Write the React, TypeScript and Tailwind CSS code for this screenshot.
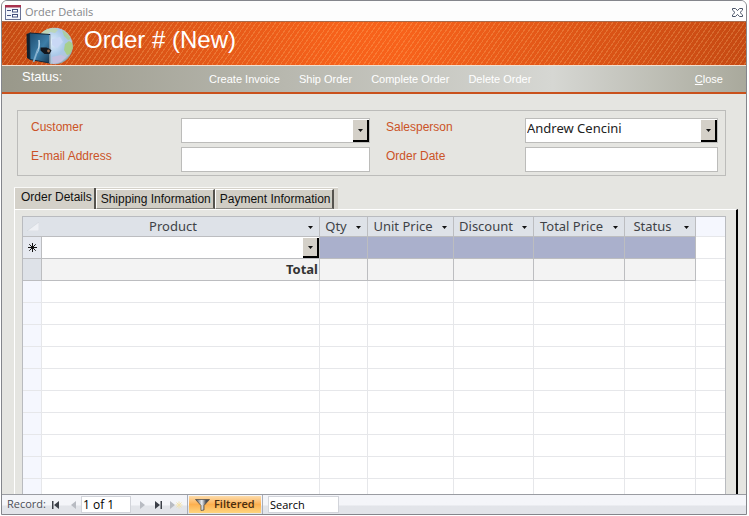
import { useState } from "react";
import type { ReactNode } from "react";

const uiFont = "font-['Liberation_Sans',sans-serif]";
const sheetFont = "font-['Noto_Sans',sans-serif]";

function FormIcon() {
  return (
    <svg width="16" height="15" viewBox="0 0 16 15" aria-hidden="true">
      <rect x="0.5" y="0.5" width="15" height="14" fill="#f4f6fc" stroke="#6a7396" />
      <rect x="0" y="0" width="16" height="2.5" fill="#a8324e" />
      <path d="M2 5.5h4M2 10.5h4" stroke="#44507e" strokeWidth="1.2" />
      <rect x="7.5" y="4.5" width="5" height="2.5" fill="#fff" stroke="#44507e" />
      <rect x="7.5" y="9.5" width="5" height="2.5" fill="#fff" stroke="#44507e" />
    </svg>
  );
}

function CloseIcon() {
  return (
    <svg width="11" height="9" viewBox="0 0 11 9" aria-hidden="true">
      <path
        d="M0.5 0.5h3L5.5 2.6L7.5 0.5h3v1.6L8 4.5l2.5 2.4v1.6h-3L5.5 6.4L3.5 8.5h-3V6.9L3 4.5L0.5 2.1Z"
        fill="#fff"
        stroke="#4a5468"
      />
    </svg>
  );
}

function OrderLogo() {
  return (
    <svg width="48" height="38" viewBox="0 0 48 38" aria-hidden="true">
      <defs>
        <radialGradient id="globe" cx="0.42" cy="0.4" r="0.62">
          <stop offset="0" stopColor="#dfeefb" />
          <stop offset="0.6" stopColor="#a9c8e8" />
          <stop offset="0.9" stopColor="#b3c6da" />
          <stop offset="1" stopColor="#8da4ac" />
        </radialGradient>
        <linearGradient id="cover" x1="0" y1="0" x2="1" y2="1">
          <stop offset="0" stopColor="#1d4a6c" />
          <stop offset="0.55" stopColor="#3d7ea8" />
          <stop offset="1" stopColor="#16354f" />
        </linearGradient>
      </defs>
      <circle cx="28.5" cy="19" r="18.3" fill="url(#globe)" />
      <path d="M15 6Q21 1 29 1l3 2-3 3-5-1-4 4-4 1Z" fill="#bdd6b4" opacity="0.9" />
      <path d="M36 3q6 3 9 9l-3 1-4-4Z" fill="#a9cf93" opacity="0.8" />
      <path d="M39 17l4-3 3 2 1 5-3 6-3 1-3-5Z" fill="#a6cf83" opacity="0.9" />
      <path d="M26 30l9-2 5 2-5 5-8 2Z" fill="#c4c0e0" />
      <path d="M26 12l8-2 3 5-6 6-5-3Z" fill="#c9d8f5" />
      <path d="M0.5 7l4-1.5v27.5l-3.5-2Z" fill="#14202c" />
      <path d="M3.5 6l20.5 1.5V36L4 32.5Z" fill="url(#cover)" stroke="#11293e" />
      <path d="M24 8v28" stroke="#d7e5ef" />
      <path d="M14.5 20.5h6l3.5 1.5 1.5 1.5-2 3.5h-5l-4-3.5Z" fill="#12161d" />
      <circle cx="22.5" cy="24" r="1.4" fill="#93694c" />
      <path d="M13 13q1 7-2 13" fill="none" stroke="#b7d5e8" strokeWidth="1.6" />
      <path d="M12 22l-4.5 13" stroke="#86b1cf" strokeWidth="1.8" />
    </svg>
  );
}

function Caret() {
  return (
    <svg width="5" height="3" viewBox="0 0 5 3" aria-hidden="true">
      <path d="M0 0h5L2.5 3Z" fill="#111" />
    </svg>
  );
}

function Combo({ id, label, options, bare = false }: { id: string; label?: string; options: string[]; bare?: boolean }) {
  return (
    <div className={`relative w-full ${bare ? "h-[21px]" : "h-[25px] border border-[#bcbcba]"}`}>
      <select
        id={id}
        aria-label={label}
        className={`block h-full w-full appearance-none bg-white pr-5 pb-1 pl-px text-[13px] text-[#222] outline-none ${sheetFont}`}
      >
        {options.map((option) => (
          <option key={option}>{option}</option>
        ))}
      </select>
      <span className="pointer-events-none absolute top-px right-0 bottom-0 flex w-4 items-center justify-center border-r-2 border-b-2 border-black bg-[#d4d0c8]">
        <Caret />
      </span>
    </div>
  );
}

function FieldLabel({ htmlFor, children, inset = false }: { htmlFor: string; children: ReactNode; inset?: boolean }) {
  return (
    <label htmlFor={htmlFor} className={`text-xs leading-[18px] text-[#cb5327] ${inset ? "pl-4" : ""}`}>
      {children}
    </label>
  );
}

const tabs = ["Order Details", "Shipping Information", "Payment Information"];

const columns = [
  { name: "Product", width: "" },
  { name: "Qty", width: "w-12" },
  { name: "Unit Price", width: "w-[86px]" },
  { name: "Discount", width: "w-20" },
  { name: "Total Price", width: "w-[91px]" },
  { name: "Status", width: "w-[71px]" },
];

const emptyRows = Array.from({ length: 10 }, (_, i) => i);

function Datasheet() {
  const line = "border-r border-b border-[#bcbdc0]";
  const faint = "border-r border-b border-[#e6e7ea]";
  return (
    <table className={`w-full table-fixed border-separate border-spacing-0 text-[13px] leading-5 text-[#3f4247] ${sheetFont}`}>
      <colgroup>
        <col className="w-[19px]" />
        {columns.map((c) => (
          <col key={c.name} className={c.width} />
        ))}
        <col className="w-[29px]" />
      </colgroup>
      <thead>
        <tr className="h-5 bg-[#dee2e8]">
          <th className="border-b border-[#bcbdc0] p-0">
            <svg className="ml-1" width="12" height="9" viewBox="0 0 12 9" aria-hidden="true">
              <path d="M12 0v9H0Z" fill="#eef0f4" stroke="#ccd0d8" strokeWidth="0.5" />
            </svg>
          </th>
          {columns.map((c) => (
            <th key={c.name} scope="col" className={`p-0 font-normal ${line}`}>
              <div className="flex h-[19px] items-center pb-0.5 pl-0.5">
                <span className="min-w-0 flex-1 text-center whitespace-nowrap">{c.name}</span>
                <button type="button" aria-label={`Sort ${c.name}`} className="flex h-4 w-[17px] shrink-0 items-center justify-center pt-1">
                  <Caret />
                </button>
              </div>
            </th>
          ))}
          <td className="border-b border-[#e6e7ea] bg-[#f5f7fe] p-0" />
        </tr>
      </thead>
      <tbody>
        <tr className="h-[22px]">
          <th scope="row" aria-label="New record" className={`bg-[#e6e9f0] p-0 ${line}`}>
            <svg className="mx-auto" width="9" height="9" viewBox="0 0 9 9" aria-hidden="true">
              <path d="M4.5 0v9M0 4.5h9M1.3 1.3l6.4 6.4M7.7 1.3L1.3 7.7" stroke="#111" />
            </svg>
          </th>
          <td className={`bg-white p-0 ${line}`}>
            <Combo id="product" label="Product" options={[""]} bare />
          </td>
          {columns.slice(1).map((c) => (
            <td key={c.name} className={`bg-[#aab0cc] p-0 ${line}`} />
          ))}
          <td className="border-b border-[#e6e7ea] bg-white p-0" />
        </tr>
        <tr className="h-[22px] bg-[#f3f3f3]">
          <td className={`bg-[#dee2e8] p-0 ${line}`} />
          <th scope="row" className={`p-0 pr-px pb-px text-right font-bold text-[#333] ${line}`}>
            Total
          </th>
          {columns.slice(1).map((c) => (
            <td key={c.name} className={`p-0 ${line}`} />
          ))}
          <td className="border-b border-[#e6e7ea] bg-white p-0" />
        </tr>
        {emptyRows.map((row) => (
          <tr key={row} className="h-[22px] bg-white">
            <td className={`bg-[#f5f7fe] p-0 ${faint}`} />
            {columns.map((c) => (
              <td key={c.name} className={`p-0 ${faint}`} />
            ))}
            <td className="border-b border-[#e6e7ea] p-0" />
          </tr>
        ))}
      </tbody>
    </table>
  );
}

function NavButton({ label, dim = false, width, children }: { label: string; dim?: boolean; width: string; children: ReactNode }) {
  return (
    <button type="button" aria-label={label} className={`flex h-4 items-center justify-center ${width} ${dim ? "text-[#b8bbc2]" : "text-[#3c4048]"}`}>
      {children}
    </button>
  );
}

function RecordBar() {
  return (
    <footer className="flex h-5 shrink-0 items-center border-t border-[#9a9ca2] bg-linear-to-b from-[#f4f5f9] from-50% to-[#e2e4e9] to-60% pl-[5px] text-[11px] text-[#4c4f57] font-['Open_Sans',sans-serif]">
      <label htmlFor="record">Record:</label>
      <div className="flex items-center">
        <NavButton label="First record" width="w-5">
          <svg width="7" height="8" viewBox="0 0 7 8" fill="currentColor" aria-hidden="true">
            <path d="M0 0h1.5v8H0ZM7 0v8L2 4Z" />
          </svg>
        </NavButton>
        <NavButton label="Previous record" width="w-[15px]" dim>
          <svg width="5" height="8" viewBox="0 0 5 8" fill="currentColor" aria-hidden="true">
            <path d="M5 0v8L0 4Z" />
          </svg>
        </NavButton>
      </div>
      <input id="record" defaultValue="1 of 1" className="h-[17px] w-[50px] border border-[#d2d4da] bg-white px-px text-xs text-black outline-none" />
      <div className="flex items-center pl-1">
        <NavButton label="Next record" width="w-4" dim>
          <svg width="5" height="8" viewBox="0 0 5 8" fill="currentColor" aria-hidden="true">
            <path d="M0 0v8L5 4Z" />
          </svg>
        </NavButton>
        <NavButton label="Last record" width="w-4">
          <svg width="7" height="8" viewBox="0 0 7 8" fill="currentColor" aria-hidden="true">
            <path d="M7 0H5.5v8H7ZM0 0v8L5 4Z" />
          </svg>
        </NavButton>
        <NavButton label="New record" width="w-5" dim>
          <svg width="13" height="8" viewBox="0 0 13 8" aria-hidden="true">
            <path d="M0 0v8L5 4Z" fill="#b8bbc2" />
            <path d="M9 0.5v7M5.5 4h7M6.5 1.5l5 5M11.5 1.5l-5 5" stroke="#f3e2ae" />
          </svg>
        </NavButton>
      </div>
      <div className="flex h-full items-center border-x border-[#a9adb8] px-px py-px">
        <button
          type="button"
          className="flex h-full w-[72px] items-center gap-1 bg-linear-to-b from-[#fbdba9] via-[#fdb04f] to-[#fed57e] pl-1.5 text-[#4b2f10]"
        >
          <svg width="15" height="12" viewBox="0 0 15 12" aria-hidden="true">
            <defs>
              <linearGradient id="funnel">
                <stop offset="0" stopColor="#3d4046" />
                <stop offset="0.45" stopColor="#eef1f5" />
                <stop offset="0.75" stopColor="#4b4e55" />
              </linearGradient>
            </defs>
            <path d="M0.5 0.5h14L9 6.5V11L6 11.5v-5Z" fill="url(#funnel)" stroke="#55514a" strokeWidth="0.8" />
          </svg>
          <span className="font-semibold">Filtered</span>
        </button>
      </div>
      <input aria-label="Search" defaultValue="Search" className="ml-[5px] h-[17px] w-[71px] border border-[#d2d4da] bg-white px-px text-[11px] text-black outline-none" />
    </footer>
  );
}

export default function App() {
  const [active, setActive] = useState(0);
  return (
    <div className="h-screen bg-white pr-0.5 pb-px pl-px">
      <div className={`flex h-full flex-col overflow-hidden rounded-t-md border border-[#84868c] bg-[#e5e5e1] ${uiFont}`}>
        <header className="shrink-0">
          <div className="flex h-5 items-center gap-1 bg-[#fdfdfd] pt-1 pr-[3px] pb-0.5 pl-[3px]">
            <FormIcon />
            <span className="flex-1 text-[11px] text-[#85868a] font-['Open_Sans',sans-serif]">Order Details</span>
            <button type="button" aria-label="Close window">
              <CloseIcon />
            </button>
          </div>
          <div className="border-t border-[#a56a4c] bg-[repeating-linear-gradient(125deg,rgba(255,200,130,0.25)_0px,rgba(255,200,130,0.25)_1px,transparent_1px,transparent_4px),linear-gradient(to_right,#c64b14,#f7621b_46%,#f7621b_54%,#c64a13)]">
            <div className="flex h-[43px] items-center gap-[10px] pl-6">
              <div className="pt-1">
                <OrderLogo />
              </div>
              <h1 className="pb-2 text-2xl leading-8 text-white">Order # (New)</h1>
            </div>
          </div>
          <nav
            aria-label="Order actions"
            className="flex h-[29px] items-center border-t border-b-2 border-t-[#f3dfcf] border-b-[#c9511c] bg-linear-to-r from-[#99988a] via-[#d6d7d3] via-74% to-[#a9a99c] pr-[23px] pl-5 text-[11px] text-white"
          >
            <span className="w-[187px] pb-1 text-[13px]">Status:</span>
            <div className="flex flex-1 gap-[19px]">
              <button type="button">Create Invoice</button>
              <button type="button">Ship Order</button>
              <button type="button">Complete Order</button>
              <button type="button">Delete Order</button>
            </div>
            <button type="button">
              <span className="underline">C</span>lose
            </button>
          </nav>
        </header>

        <main className="flex min-h-0 flex-1 flex-col pt-4">
          <form className="mr-5 ml-[15px] grid grid-cols-[150px_189fr_155px_193fr] gap-y-1 border border-[#bcbcba] pt-[7px] pr-[7px] pb-[3px] pl-[13px]">
            <FieldLabel htmlFor="customer">Customer</FieldLabel>
            <Combo id="customer" options={[""]} />
            <FieldLabel htmlFor="salesperson" inset>
              Salesperson
            </FieldLabel>
            <Combo id="salesperson" options={["Andrew Cencini"]} />
            <FieldLabel htmlFor="email">E-mail Address</FieldLabel>
            <input id="email" type="text" className="h-[25px] w-full min-w-0 border border-[#bcbcba] bg-white px-1 text-sm outline-none" />
            <FieldLabel htmlFor="date" inset>
              Order Date
            </FieldLabel>
            <input id="date" type="text" className="h-[25px] w-full min-w-0 border border-[#bcbcba] bg-white px-1 text-sm outline-none" />
          </form>

          <div className="mt-[11px] flex min-h-0 flex-1 flex-col pr-2 pl-3">
            <div role="tablist" className="flex h-[22px] shrink-0 self-start border-t border-[#f8f8f6] bg-[#d4d1c9] pr-1 text-xs text-[#111]">
              {tabs.map((tab, i) => (
                <button
                  key={tab}
                  type="button"
                  role="tab"
                  aria-selected={active === i}
                  onClick={() => setActive(i)}
                  className={
                    active === i
                      ? "border-r-2 border-l border-r-[#55534e] border-l-white bg-[#d4d1c9] pr-0.5 pb-1 pl-1.5 whitespace-nowrap"
                      : "mt-px border-t border-r-2 border-b border-l border-t-white border-r-[#55534e] border-b-[#8a8882] border-l-white bg-[#d0cdc4] pr-0.5 pl-1 whitespace-nowrap"
                  }
                >
                  {tab}
                </button>
              ))}
            </div>
            <div role="tabpanel" className="min-h-0 flex-1 overflow-hidden border-t border-r-2 border-l border-t-white border-r-black border-l-white pt-1.5 pr-2.5 pl-[7px]">
              <div className="h-full overflow-hidden border-x border-t border-[#b9bbbf] bg-white">
                <Datasheet />
              </div>
            </div>
          </div>
        </main>
        <RecordBar />
      </div>
    </div>
  );
}
